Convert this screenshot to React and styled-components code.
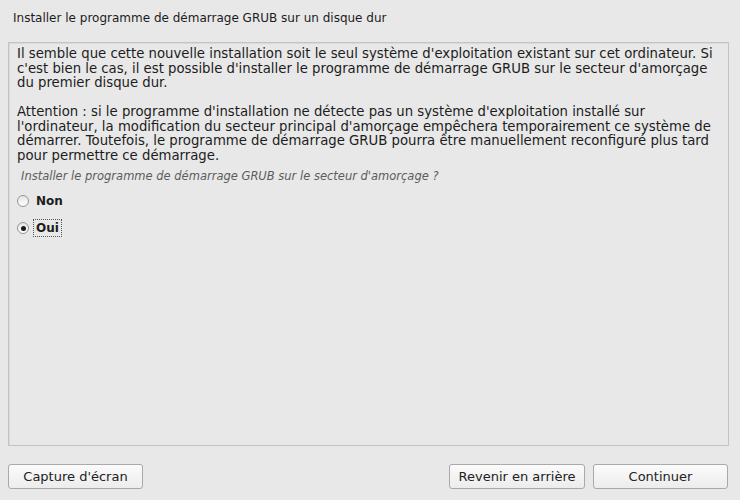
import React from 'react';
import styled, { createGlobalStyle } from 'styled-components';

const GlobalStyle = createGlobalStyle`
  html, body {
    margin: 0;
    padding: 0;
    background: #e8e8e8;
  }

  body {
    font-family: 'DejaVu Sans', 'Liberation Sans', sans-serif;
    font-size: 12px;
    color: #1c1c1c;
  }
`;

const Window = styled.div`
  display: flex;
  flex-direction: column;
  width: 740px;
  height: 500px;
  background: #e8e8e8;
`;

const Title = styled.header`
  display: flex;
  align-items: center;
  height: 36px;
  padding: 0 13px;
  margin-bottom: 6px;
  font-size: 12px;
`;

const Panel = styled.section`
  display: flex;
  flex-direction: column;
  height: 404px;
  margin: 0 11px 0 8px;
  padding: 4px 10px 0 8px;
  box-sizing: border-box;
  border: 1px solid #c3c3c3;
  box-shadow: inset 1px 1px 0 #dadada;

  p {
    margin: 0;
    font-size: 13.25px;
    line-height: 14.5px;
    white-space: nowrap;
  }

  p + p {
    margin-top: 14.5px;
  }
`;

const Question = styled.div`
  margin: 6px 0 0 4px;
  font-style: italic;
  font-size: 11.5px;
  line-height: 14px;
  color: #5c5c5c;
`;

const Choices = styled.div`
  display: flex;
  flex-direction: column;
  gap: 7px;
  margin-top: 8px;
`;

const Choice = styled.label`
  display: flex;
  align-items: center;
  gap: 4px;
  height: 20px;
  font-weight: bold;
  font-size: 12px;
`;

const Dot = styled.span`
  position: relative;
  width: 12px;
  height: 12px;
  box-sizing: border-box;
  border-radius: 50%;
  border: 1px solid #949494;
  background: linear-gradient(#e4e4e4, #ffffff);

  &::after {
    content: '';
    display: ${(p) => (p.checked ? 'block' : 'none')};
    position: absolute;
    left: 2.5px;
    top: 2.5px;
    width: 5px;
    height: 5px;
    border-radius: 50%;
    background: #1a1a1a;
  }
`;

const ChoiceText = styled.span`
  padding: 1px 2px;
  border: 1px dotted ${(p) => (p.focused ? '#555' : 'transparent')};
`;

const Footer = styled.footer`
  display: flex;
  align-items: center;
  gap: 8px;
  padding: 18px 12px 0 8px;
`;

const Spacer = styled.div`
  flex: 1;
`;

const Button = styled.button`
  width: ${(p) => p.width || 135}px;
  height: 25px;
  padding: 0;
  border: 1px solid #a9a9a9;
  border-radius: 3px;
  background: linear-gradient(#fbfbfb, #ececec);
  font-family: 'DejaVu Sans', 'Liberation Sans', sans-serif;
  font-size: 13px;
  color: #222;
`;

const App = () => {
  return (
    <Window>
      <GlobalStyle />
      <Title>Installer le programme de démarrage GRUB sur un disque dur</Title>
      <Panel>
        <p>
          Il semble que cette nouvelle installation soit le seul système d'exploitation existant sur cet ordinateur. Si
          <br />
          c'est bien le cas, il est possible d'installer le programme de démarrage GRUB sur le secteur d'amorçage
          <br />
          du premier disque dur.
        </p>
        <p>
          Attention : si le programme d'installation ne détecte pas un système d'exploitation installé sur
          <br />
          l'ordinateur, la modification du secteur principal d'amorçage empêchera temporairement ce système de
          <br />
          démarrer. Toutefois, le programme de démarrage GRUB pourra être manuellement reconfiguré plus tard
          <br />
          pour permettre ce démarrage.
        </p>
        <Question>Installer le programme de démarrage GRUB sur le secteur d'amorçage ?</Question>
        <Choices>
          <Choice>
            <Dot />
            <ChoiceText>Non</ChoiceText>
          </Choice>
          <Choice>
            <Dot checked />
            <ChoiceText focused>Oui</ChoiceText>
          </Choice>
        </Choices>
      </Panel>
      <Footer>
        <Button>Capture d'écran</Button>
        <Spacer />
        <Button width={136}>Revenir en arrière</Button>
        <Button>Continuer</Button>
      </Footer>
    </Window>
  );
};

export default App;
